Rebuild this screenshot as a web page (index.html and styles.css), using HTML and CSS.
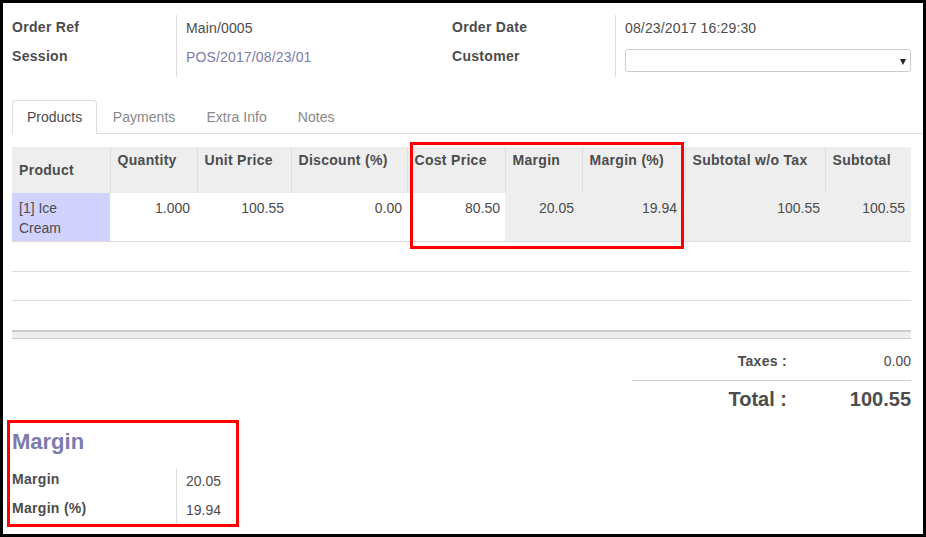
FILE: index.html
```html
<!DOCTYPE html>
<html>
<head>
<meta charset="utf-8">
<link rel="stylesheet" href="styles.css">
</head>
<body>
<div class="frame">
  <div class="top">
    <div class="group left">
      <div class="lbl">Order Ref</div>
      <div class="val">Main/0005</div>
      <div class="lbl">Session</div>
      <div class="val last"><span class="link">POS/2017/08/23/01</span></div>
    </div>
    <div class="group right">
      <div class="lbl">Order Date</div>
      <div class="val">08/23/2017 16:29:30</div>
      <div class="lbl">Customer</div>
      <div class="val last"><div class="select"><span class="caret"></span></div></div>
    </div>
  </div>

  <div class="tabs">
    <div class="tab active">Products</div>
    <div class="tab">Payments</div>
    <div class="tab">Extra Info</div>
    <div class="tab">Notes</div>
  </div>

  <table class="lines">
    <colgroup>
      <col class="c-product"><col class="c-qty"><col class="c-unit"><col class="c-disc"><col class="c-cost"><col class="c-margin"><col class="c-marginp"><col class="c-subnotax"><col class="c-sub">
    </colgroup>
    <thead>
      <tr>
        <th class="mid">Product</th>
        <th>Quantity</th>
        <th>Unit Price</th>
        <th>Discount (%)</th>
        <th>Cost Price</th>
        <th>Margin</th>
        <th>Margin (%)</th>
        <th>Subtotal w/o Tax</th>
        <th>Subtotal</th>
      </tr>
    </thead>
    <tbody>
      <tr class="data">
        <td class="prod">[1] Ice Cream</td>
        <td class="num">1.000</td>
        <td class="num">100.55</td>
        <td class="num p5">0.00</td>
        <td class="num p5">80.50</td>
        <td class="num ro p8">20.05</td>
        <td class="num ro p8">19.94</td>
        <td class="num ro p5">100.55</td>
        <td class="num ro p6">100.55</td>
      </tr>
      <tr class="empty e1"><td colspan="9"></td></tr>
      <tr class="empty e2"><td colspan="9"></td></tr>
      <tr class="empty e3"><td colspan="9"></td></tr>
    </tbody>
    <tfoot>
      <tr><td colspan="9"></td></tr>
    </tfoot>
  </table>

  <div class="totals">
    <div class="t-lbl taxes">Taxes :</div>
    <div class="t-val taxes">0.00</div>
    <div class="t-lbl total">Total :</div>
    <div class="t-val total">100.55</div>
  </div>

  <h2 class="sep">Margin</h2>
  <div class="mgroup">
    <div class="lbl">Margin</div>
    <div class="val">20.05</div>
    <div class="lbl">Margin (%)</div>
    <div class="val last">19.94</div>
  </div>

  <div class="mark mark-table"></div>
  <div class="mark mark-margin"></div>
</div>
</body>
</html>
```

FILE: styles.css
```css
html, body {
  margin: 0;
  padding: 0;
  background: #fff;
}

.frame {
  position: relative;
  width: 926px;
  height: 537px;
  box-sizing: border-box;
  border: 3px solid #000;
  padding: 12px 12px 0 9px;
  background: #fff;
  font-family: "Liberation Sans", Arial, sans-serif;
  font-size: 14px;
  line-height: 20px;
  color: #4c4c4c;
  overflow: hidden;
}

/* ---------- top form ---------- */
.top {
  display: flex;
}

.group {
  display: grid;
  grid-template-columns: 164px 1fr;
}

.group.left {
  width: 440px;
}

.group.right {
  flex: 1;
  grid-template-columns: 163px 1fr;
}

.group .lbl {
  font-weight: bold;
  letter-spacing: 0.3px;
  padding: 2px 0 7px;
}

.group .val {
  border-left: 1px solid #ddd;
  padding: 3px 0 6px 9px;
  letter-spacing: 0.15px;
}

.group .val.last {
  padding-bottom: 4px;
  height: 26px;
}

.link {
  color: #7c7bad;
}

.select {
  position: relative;
  margin-top: 2px;
  height: 23px;
  box-sizing: border-box;
  border: 1px solid #ccc;
  border-radius: 3px;
  background: #fff;
}

.caret {
  position: absolute;
  right: 4px;
  top: 9px;
  width: 0;
  height: 0;
  border-left: 3.5px solid transparent;
  border-right: 3.5px solid transparent;
  border-top: 6px solid #222;
}

/* ---------- tabs ---------- */
.tabs {
  display: flex;
  margin-top: 23px;
  margin-right: -12px;
  border-bottom: 1px solid #ddd;
}

.tab {
  padding: 6px 14.5px;
  border: 1px solid transparent;
  border-bottom: 0;
  color: #888;
  letter-spacing: 0.05px;
}

.tab.active {
  color: #4c4c4c;
  background: #fff;
  border-color: #ddd;
  border-radius: 4px 4px 0 0;
  margin-bottom: -1px;
  padding: 6px 14px 7px;
  letter-spacing: 0;
}

/* ---------- lines table ---------- */
.lines {
  margin-top: 13px;
  width: 899px;
  table-layout: fixed;
  border-collapse: collapse;
  border-spacing: 0;
}

.c-product { width: 98px; }
.c-qty { width: 87px; }
.c-unit { width: 94px; }
.c-disc { width: 116px; }
.c-cost { width: 98px; }
.c-margin { width: 77px; }
.c-marginp { width: 103px; }
.c-subnotax { width: 140px; }
.c-sub { width: 86px; }

.lines thead tr {
  height: 46px;
}

.lines th {
  background: #eee;
  text-align: left;
  vertical-align: top;
  font-weight: bold;
  letter-spacing: 0.3px;
  padding: 3px 7px 0 7px;
  border-left: 1px solid #ddd;
  white-space: nowrap;
  overflow: hidden;
}

.lines th:first-child {
  border-left: 0;
}

.lines th.mid {
  vertical-align: middle;
  padding-top: 0;
  padding-bottom: 1px;
}

.lines tr.data {
  height: 48px;
  border-bottom: 1px solid #ddd;
}

.lines td {
  vertical-align: top;
  padding: 5px 7px 3px 7px;
}

.lines td.prod {
  background: #d2d2ff;
}

.lines td.num {
  text-align: right;
}

.lines td.p5 { padding-right: 5px; }
.lines td.p6 { padding-right: 6px; }
.lines td.p8 { padding-right: 8px; }

.lines td.ro {
  background: #eee;
}

.lines tr.empty {
  border-bottom: 1px solid #ddd;
}

.lines tr.e1 { height: 30px; }
.lines tr.e2 { height: 29px; }
.lines tr.e3 { height: 30px; border-bottom: 0; }

.lines tfoot tr {
  height: 6px;
  border-top: 2px solid #ccc;
  border-bottom: 1px solid #ccc;
}

.lines tfoot td {
  padding: 0;
  background: #eee;
  height: 6px;
}

/* ---------- totals ---------- */
.totals {
  margin-top: 12px;
  margin-left: auto;
  width: 279px;
  display: grid;
  grid-template-columns: 155px 124px;
}

.t-lbl {
  text-align: right;
  font-weight: bold;
  letter-spacing: 0.3px;
}

.t-val {
  text-align: right;
}

.taxes {
  padding-bottom: 9px;
  border-bottom: 1px solid #ccc;
}

.total {
  font-size: 20px;
  line-height: 24px;
  font-weight: bold;
  letter-spacing: 0;
  padding-top: 6px;
}

/* ---------- margin section ---------- */
.sep {
  margin: 18px 0 0;
  font-size: 22px;
  line-height: 26px;
  font-weight: bold;
  color: #7c7bad;
}

.mgroup {
  margin-top: 13px;
  display: grid;
  grid-template-columns: 164px 1fr;
  width: 230px;
}

.mgroup .lbl {
  font-weight: bold;
  letter-spacing: 0.3px;
  padding: 1px 0 8px;
}

.mgroup .val {
  border-left: 1px solid #ddd;
  padding: 3px 0 6px 9px;
}

.mgroup .val.last {
  padding-bottom: 3px;
}

/* ---------- annotation boxes ---------- */
.mark {
  position: absolute;
  box-sizing: border-box;
  border: 3px solid #f00;
}

.mark-table {
  left: 407px;
  top: 139px;
  width: 274px;
  height: 107px;
}

.mark-margin {
  left: 4px;
  top: 417px;
  width: 232px;
  height: 107px;
}
```
